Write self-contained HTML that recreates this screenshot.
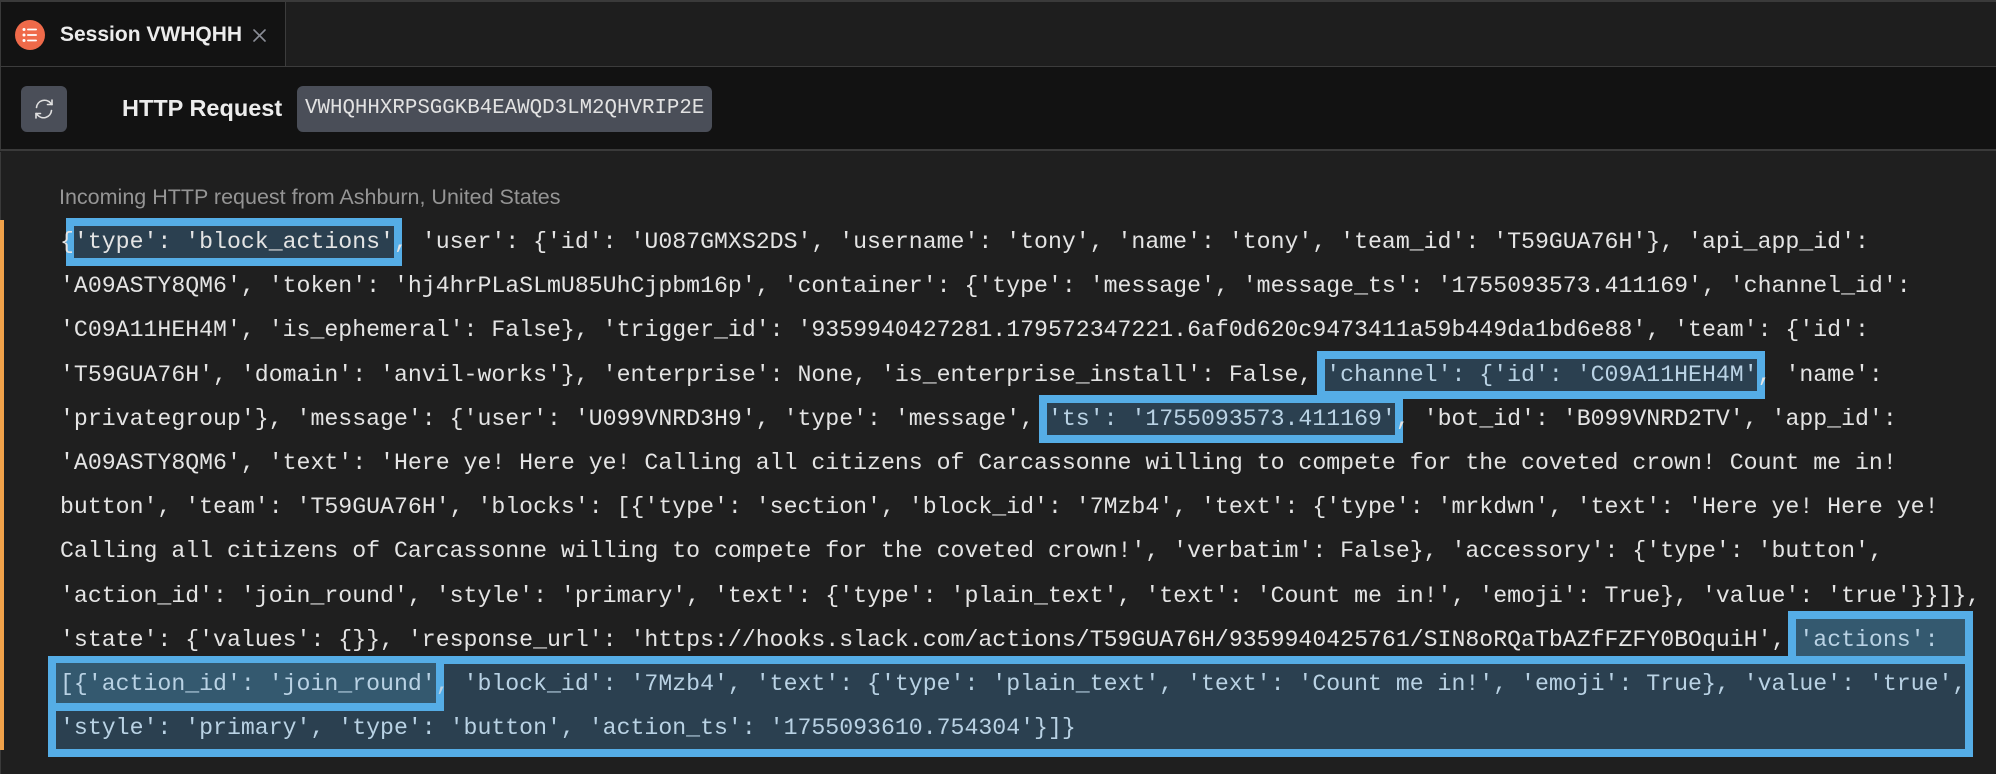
<!DOCTYPE html>
<html><head><meta charset="utf-8"><style>
*{margin:0;padding:0;box-sizing:border-box}
body{width:1996px;height:774px;background:#1f1f1f;position:relative;overflow:hidden;font-family:"Liberation Sans",sans-serif}
.abs{position:absolute}
.ln{position:absolute;left:60px;height:44.2px;line-height:44.2px;font-family:"Liberation Mono","DejaVu Sans Mono",monospace;font-size:23.2px;color:#e4e4e4;white-space:pre;z-index:2}
.box{position:absolute;border:8px solid #55ade6;background:#2b4050;z-index:1}
.sel{color:#b9d2e4}
</style></head><body>
<div class="abs" style="left:0;top:0;width:1996px;height:67px;background:#1e1e1e;border-top:2px solid #3a3a3a;border-bottom:1px solid #3c3c3c"></div>
<div class="abs" style="left:0;top:2px;width:286px;height:64px;background:#131313;border-right:1px solid #3c3c3c;border-left:1px solid #3a3a3a"></div>
<div class="abs" style="left:15px;top:20px;width:30px;height:30px;border-radius:50%;background:#ef6a4a"></div>
<svg class="abs" style="left:15px;top:20px" width="30" height="30" viewBox="0 0 30 30">
<g fill="#fff"><circle cx="9" cy="9.5" r="1.5"/><circle cx="9" cy="15" r="1.5"/><circle cx="9" cy="20.5" r="1.5"/>
<rect x="12" y="8.6" width="10" height="1.8" rx=".9"/><rect x="12" y="14.1" width="10" height="1.8" rx=".9"/><rect x="12" y="19.6" width="10" height="1.8" rx=".9"/></g></svg>
<div class="abs" style="left:60px;top:21px;font-size:21px;font-weight:bold;color:#ececec;line-height:28px">Session VWHQHH</div>
<svg class="abs" style="left:252px;top:28px" width="15" height="15" viewBox="0 0 15 15" stroke="#8a8d96" stroke-width="1.6" stroke-linecap="round"><path d="M2 2L13 13M13 2L2 13"/></svg>
<div class="abs" style="left:0;top:67px;width:1996px;height:84px;background:#121212;border-bottom:2px solid #3a3a3a;border-left:1px solid #3a3a3a"></div>
<div class="abs" style="left:21px;top:86px;width:46px;height:46px;border-radius:6px;background:#4a4e58"></div>
<svg class="abs" style="left:21px;top:86px" width="46" height="46" viewBox="0 0 46 46" fill="none" stroke="#e0e0e0" stroke-width="1.6" stroke-linecap="round" stroke-linejoin="round">
<path d="M15.5 21.5a8 8 0 0 1 14-4.5l1.5 1.5"/><path d="M31 14v4.5h-4.5"/>
<path d="M30.5 24.5a8 8 0 0 1-14 4.5L15 27.5"/><path d="M15 32v-4.5h4.5"/></svg>
<div class="abs" style="left:122px;top:93px;font-size:23.5px;font-weight:bold;color:#ececec;line-height:30px">HTTP Request</div>
<div class="abs" style="left:297px;top:86px;width:415px;height:46px;border-radius:6px;background:#4a4e58;color:#e2e2e2;font-family:'Liberation Mono',monospace;font-size:20.8px;line-height:46px;padding-left:8px">VWHQHHXRPSGGKB4EAWQD3LM2QHVRIP2E</div>
<div class="abs" style="left:0;top:152px;width:1px;height:622px;background:#3a3a3a"></div>
<div class="abs" style="left:59px;top:183px;font-size:21.5px;color:#959595;line-height:28px">Incoming HTTP request from Ashburn, United States</div>
<div class="abs" style="left:0;top:220px;width:4px;height:530px;background:#f0a24a"></div>

<div class="box" style="left:66px;top:218px;width:336px;height:48px"></div>
<div class="box" style="left:1317px;top:351px;width:448px;height:48px"></div>
<div class="box" style="left:1039px;top:395px;width:364px;height:48px"></div>
<div class="box" style="left:1788px;top:611px;width:185px;height:53px;background:#34596f"></div>
<div class="box" style="left:48px;top:656px;width:1925px;height:101px"></div>
<div class="abs" style="left:56px;top:663px;width:388px;height:48px;border-right:8px solid #55ade6;border-bottom:8px solid #55ade6;background:#34596f;z-index:1"></div>

<div class="ln" style="top:220px">{'type': 'block_actions', 'user': {'id': 'U087GMXS2DS', 'username': 'tony', 'name': 'tony', 'team_id': 'T59GUA76H'}, 'api_app_id':</div>
<div class="ln" style="top:264px">'A09ASTY8QM6', 'token': 'hj4hrPLaSLmU85UhCjpbm16p', 'container': {'type': 'message', 'message_ts': '1755093573.411169', 'channel_id':</div>
<div class="ln" style="top:308px">'C09A11HEH4M', 'is_ephemeral': False}, 'trigger_id': '9359940427281.179572347221.6af0d620c9473411a59b449da1bd6e88', 'team': {'id':</div>
<div class="ln" style="top:353px">'T59GUA76H', 'domain': 'anvil-works'}, 'enterprise': None, 'is_enterprise_install': False, <span class="sel">'channel': {'id': 'C09A11HEH4M'</span>, 'name':</div>
<div class="ln" style="top:397px">'privategroup'}, 'message': {'user': 'U099VNRD3H9', 'type': 'message', <span class="sel">'ts': '1755093573.411169'</span>, 'bot_id': 'B099VNRD2TV', 'app_id':</div>
<div class="ln" style="top:441px">'A09ASTY8QM6', 'text': 'Here ye! Here ye! Calling all citizens of Carcassonne willing to compete for the coveted crown! Count me in!</div>
<div class="ln" style="top:485px">button', 'team': 'T59GUA76H', 'blocks': [{'type': 'section', 'block_id': '7Mzb4', 'text': {'type': 'mrkdwn', 'text': 'Here ye! Here ye!</div>
<div class="ln" style="top:529px">Calling all citizens of Carcassonne willing to compete for the coveted crown!', 'verbatim': False}, 'accessory': {'type': 'button',</div>
<div class="ln" style="top:574px">'action_id': 'join_round', 'style': 'primary', 'text': {'type': 'plain_text', 'text': 'Count me in!', 'emoji': True}, 'value': 'true'}}]},</div>
<div class="ln" style="top:618px">'state': {'values': {}}, 'response_url': 'https://hooks.slack.com/actions/T59GUA76H/9359940425761/SIN8oRQaTbAZfFZFY0BOquiH', <span class="sel">'actions':</span></div>
<div class="ln sel" style="top:662px">[{'action_id': 'join_round', 'block_id': '7Mzb4', 'text': {'type': 'plain_text', 'text': 'Count me in!', 'emoji': True}, 'value': 'true',</div>
<div class="ln sel" style="top:706px">'style': 'primary', 'type': 'button', 'action_ts': '1755093610.754304'}]}</div>
</body></html>
